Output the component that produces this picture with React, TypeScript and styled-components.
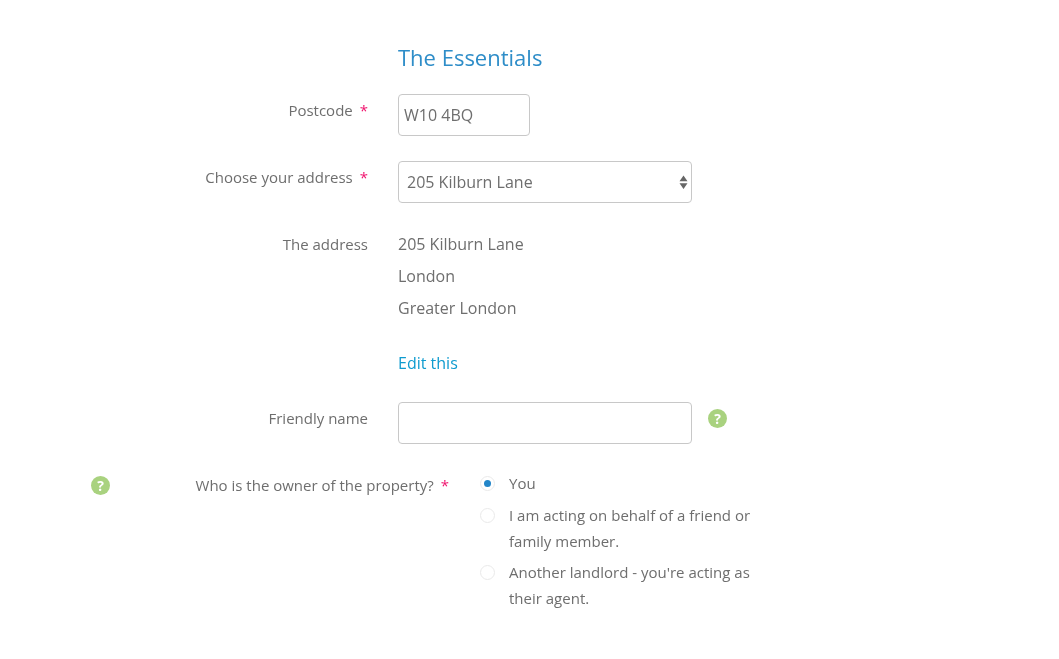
import React from "react";
import styled, { createGlobalStyle } from "styled-components";

const GlobalStyle = createGlobalStyle`
  html, body {
    margin: 0;
    background: #fff;
    font-family: "Open Sans", "Liberation Sans", sans-serif;
    color: #666;
  }
`;

const Form = styled.form`
  width: 1059px;
  height: 659px;
  overflow: hidden;
  padding-top: 43px;
  box-sizing: border-box;
  will-change: transform;
`;
const Title = styled.h2`
  margin: 0 0 22px 398px;
  font-size: 22px;
  line-height: 29px;
  font-weight: 400;
  color: #2e8dc8;
`;
const Row = styled.div<{ $mb: number }>`
  display: flex;
  align-items: flex-start;
  margin-bottom: ${({ $mb }) => $mb}px;
`;
const Label = styled.label<{ $width?: number; $top?: number }>`
  width: ${({ $width }) => $width || 368}px;
  margin-right: 30px;
  flex: none;
  display: flex;
  justify-content: flex-end;
  font-size: 15px;
  line-height: 20px;
  padding-top: ${({ $top }) => $top ?? 6}px;
  color: #6e6e6e;
`;
const Star = styled.span`
  color: #f0146e;
  margin-left: 7px;
  font-size: 15px;
`;
const TextInput = styled.input<{ $width: number }>`
  width: ${({ $width }) => $width}px;
  height: 42px;
  box-sizing: border-box;
  border: 1px solid #c8c8c8;
  border-radius: 4px;
  padding: 0 5px;
  font: 400 16px "Open Sans", sans-serif;
  color: #6e6e6e;
  outline: none;
`;
const SelectWrap = styled.div`
  position: relative;
  width: 294px;
  height: 42px;
`;
const Select = styled.select`
  width: 100%;
  height: 100%;
  appearance: none;
  background: #fff;
  border: 1px solid #c8c8c8;
  border-radius: 4px;
  padding: 0 8px;
  font: 400 16px "Open Sans", sans-serif;
  color: #6e6e6e;
  outline: none;
`;
const Arrows = styled.svg`
  position: absolute;
  right: 4px;
  top: 13px;
  width: 9px;
  height: 16px;
  pointer-events: none;
`;
const AddressLines = styled.div`
  font-size: 16px;
  line-height: 32px;
  color: #6e6e6e;
`;
const EditLink = styled.a`
  display: block;
  margin-top: 27px;
  font-size: 16px;
  line-height: 24px;
  color: #0e9bcf;
  text-decoration: none;
`;
const Help = styled.span`
  flex: none;
  width: 19px;
  height: 19px;
  border-radius: 50%;
  background: #a9d27f;
  color: #fff;
  font: 700 14px/19px "Open Sans", sans-serif;
  text-align: center;
`;
const InputHelp = styled(Help)`
  margin: 7px 0 0 16px;
`;
const RowHelp = styled(Help)`
  margin: 6px 0 0 91px;
`;
const Radios = styled.div`
  width: 285px;
  margin-left: 1px;
`;
const RadioRow = styled.label`
  display: flex;
  align-items: flex-start;
  font-size: 15px;
  line-height: 26px;
  color: #6e6e6e;
  margin-bottom: 5.5px;
`;
const RadioDot = styled.span<{ $on?: boolean }>`
  flex: none;
  width: 15px;
  height: 15px;
  margin: 6px 14px 0 0;
  box-sizing: border-box;
  border-radius: 50%;
  border: 1px solid #e9e9e9;
  background: #fff;
  display: flex;
  align-items: center;
  justify-content: center;
  &::after {
    content: "";
    display: ${({ $on }) => ($on ? "block" : "none")};
    width: 7px;
    height: 7px;
    border-radius: 50%;
    background: #2285c8;
  }
`;

const App: React.FC = () => {
  return (
    <Form>
      <GlobalStyle />
      <Title>The Essentials</Title>

      <Row $mb={25}>
        <Label>Postcode<Star>*</Star></Label>
        <TextInput $width={132} defaultValue="W10 4BQ" />
      </Row>

      <Row $mb={25}>
        <Label>Choose your address<Star>*</Star></Label>
        <SelectWrap>
          <Select defaultValue="205">
            <option value="205">205 Kilburn Lane</option>
          </Select>
          <Arrows viewBox="0 0 9 16">
            <path d="M4.5 1.5 8.5 7.2H.5zM4.5 15 .5 9.3h8z" fill="#666" />
          </Arrows>
        </SelectWrap>
      </Row>

      <Row $mb={27}>
        <Label>The address</Label>
        <div>
          <AddressLines>
            205 Kilburn Lane<br />
            London<br />
            Greater London
          </AddressLines>
          <EditLink href="#">Edit this</EditLink>
        </div>
      </Row>

      <Row $mb={26}>
        <Label>Friendly name</Label>
        <TextInput $width={294} />
        <InputHelp>?</InputHelp>
      </Row>

      <Row $mb={0}>
        <RowHelp>?</RowHelp>
        <Label $width={339} $top={5}>Who is the owner of the property?<Star>*</Star></Label>
        <Radios>
          <RadioRow><RadioDot $on />You</RadioRow>
          <RadioRow><RadioDot />I am acting on behalf of a friend or family member.</RadioRow>
          <RadioRow><RadioDot />Another landlord - you're acting as their agent.</RadioRow>
        </Radios>
      </Row>
    </Form>
  );
};

export default App;
